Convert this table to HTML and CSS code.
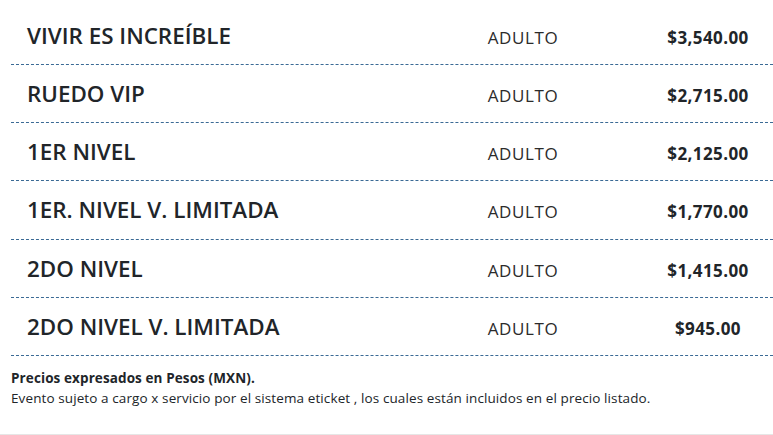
FILE: index.html
```html
<!DOCTYPE html>
<html lang="es">
<head>
<meta charset="utf-8">
<title>Precios</title>
<link rel="stylesheet" href="styles.css">
</head>
<body>
<div class="page">
  <div class="prices">
    <div class="row"><div class="name">VIVIR ES INCREÍBLE</div><div class="type">ADULTO</div><div class="price">$3,540.00</div></div>
    <div class="row"><div class="name">RUEDO VIP</div><div class="type">ADULTO</div><div class="price">$2,715.00</div></div>
    <div class="row"><div class="name">1ER NIVEL</div><div class="type">ADULTO</div><div class="price">$2,125.00</div></div>
    <div class="row"><div class="name">1ER. NIVEL V. LIMITADA</div><div class="type">ADULTO</div><div class="price">$1,770.00</div></div>
    <div class="row"><div class="name">2DO NIVEL</div><div class="type">ADULTO</div><div class="price">$1,415.00</div></div>
    <div class="row"><div class="name">2DO NIVEL V. LIMITADA</div><div class="type">ADULTO</div><div class="price">$945.00</div></div>
  </div>
  <div class="notes">
    <p class="strong">Precios expresados en Pesos (MXN).</p>
    <p>Evento sujeto a cargo x servicio por el sistema eticket , los cuales están incluidos en el precio listado.</p>
  </div>
</div>
</body>
</html>
```

FILE: styles.css
```css
html, body {
  margin: 0;
  padding: 0;
  background: #ffffff;
}
body {
  font-family: "Open Sans", "Noto Sans", sans-serif;
  color: #212529;
  overflow: hidden;
}
.page {
  padding-top: 6.8px;
  border-bottom: 1px solid #e6e6e6;
}
.prices {
  margin-left: 11px;
}
.row {
  display: grid;
  grid-template-columns: 1fr 130px 185px;
  align-items: baseline;
  height: 58.2px;
  box-sizing: border-box;
  padding-top: 14px;
  border-bottom: 1px dashed #3b6a95;
}
.name {
  padding-left: 16px;
  font-size: 22.4px;
  line-height: 30px;
  font-weight: 600;
  color: #212529;
}
.type {
  text-align: center;
  font-size: 17px;
  letter-spacing: 0.6px;
  line-height: 24px;
  color: #2b2b2b;
}
.price {
  padding-left: 55px;
  text-align: center;
  font-size: 17px;
  letter-spacing: 0.4px;
  line-height: 24px;
  font-weight: 700;
  color: #212529;
}
.notes {
  padding: 12px 11px 26px;
  font-size: 13.5px;
  letter-spacing: 0.1px;
  line-height: 20px;
  color: #212529;
}
.notes p {
  margin: 0;
}
.notes .strong {
  font-weight: 700;
}
```
